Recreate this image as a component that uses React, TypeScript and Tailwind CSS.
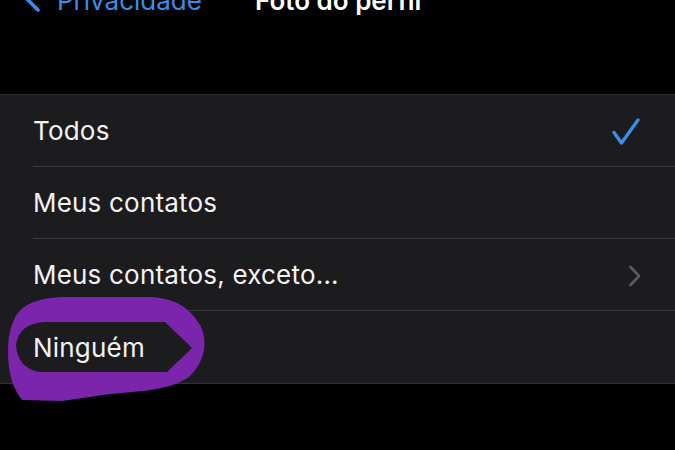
import { PropsWithChildren } from "react";

interface Row {
  label: string;
  accessory?: "check" | "chevron";
}

const rows: Row[] = [
  { label: "Todos", accessory: "check" },
  { label: "Meus contatos" },
  { label: "Meus contatos, exceto...", accessory: "chevron" },
  { label: "Ninguém" },
];

function Check() {
  return (
    <svg width="30" height="30" viewBox="0 0 30 30" fill="none">
      <path
        d="M3 15.5 L10.5 26 L27 3"
        stroke="#3b8ee6"
        strokeWidth="3.4"
        strokeLinecap="round"
        strokeLinejoin="round"
      />
    </svg>
  );
}

function Chevron() {
  return (
    <svg width="14" height="22" viewBox="0 0 14 22" fill="none">
      <path
        d="M2.5 2 L11 11 L2.5 20"
        stroke="#5c5c60"
        strokeWidth="2.6"
        strokeLinecap="round"
        strokeLinejoin="round"
      />
    </svg>
  );
}

function ListRow(props: PropsWithChildren<{ row: Row; last: boolean }>) {
  const { row, last } = props;
  return (
    <div className="pl-[33px] h-[72px]">
      <div
        className={`h-full flex items-center justify-between pr-[36px] ${
          last ? "" : "border-b border-[#38383a]"
        }`}
      >
        <span className="text-[26px] text-[#f2f2f2] tracking-[0.2px]">{row.label}</span>
        {row.accessory === "check" && (
          <div className="mr-[-2px] mt-[2px]">
            <Check />
          </div>
        )}
        {row.accessory === "chevron" && (
          <div className="mr-[-3px] mt-[2px]">
            <Chevron />
          </div>
        )}
      </div>
    </div>
  );
}

export default function App() {
  return (
    <div className="w-[675px] h-[450px] bg-black overflow-hidden relative font-['Inter',sans-serif]">
      {/* nav bar, mostly cut off at the top */}
      <div className="h-[94px] flex flex-col">
        <div className="flex items-start -mt-[12px] pl-[22px]">
          <svg width="20" height="30" viewBox="0 0 20 30" fill="none" className="mt-[-4px]">
            <path
              d="M16 2 L4 14 L16 26"
              stroke="#3b8ee6"
              strokeWidth="3.6"
              strokeLinecap="round"
              strokeLinejoin="round"
            />
          </svg>
          <span className="ml-[15px] text-[26px] leading-none text-[#3b8ee6]">Privacidade</span>
          <span className="ml-[53px] text-[26px] leading-none font-semibold text-white">
            Foto do perfil
          </span>
        </div>
      </div>

      <div className="bg-[#1c1c1e] border-t border-b border-[#333335]">
        {rows.map((r, i) => (
          <ListRow key={r.label} row={r} last={i === rows.length - 1} />
        ))}
      </div>

      {/* hand drawn purple ring around "Ninguém" */}
      <svg
        className="absolute left-0 top-[290px]"
        width="220"
        height="120"
        viewBox="0 0 220 120"
        fill="none"
      >
        <path
          fillRule="evenodd"
          fill="#7b24ac"
          d="M14 30 C20 15 35 9 60 7 L150 7 C175 8 190 18 200 35 C208 50 206 70 190 86 C175 98 150 101 110 104 L62 111 L22 110 C14 100 8 85 8 62 C8 48 10 38 14 30 Z M16 55 C18 40 28 33 45 32 L165 32 L192 58 L167 82 L40 82 C25 80 17 70 16 55 Z"
        />
      </svg>
    </div>
  );
}
